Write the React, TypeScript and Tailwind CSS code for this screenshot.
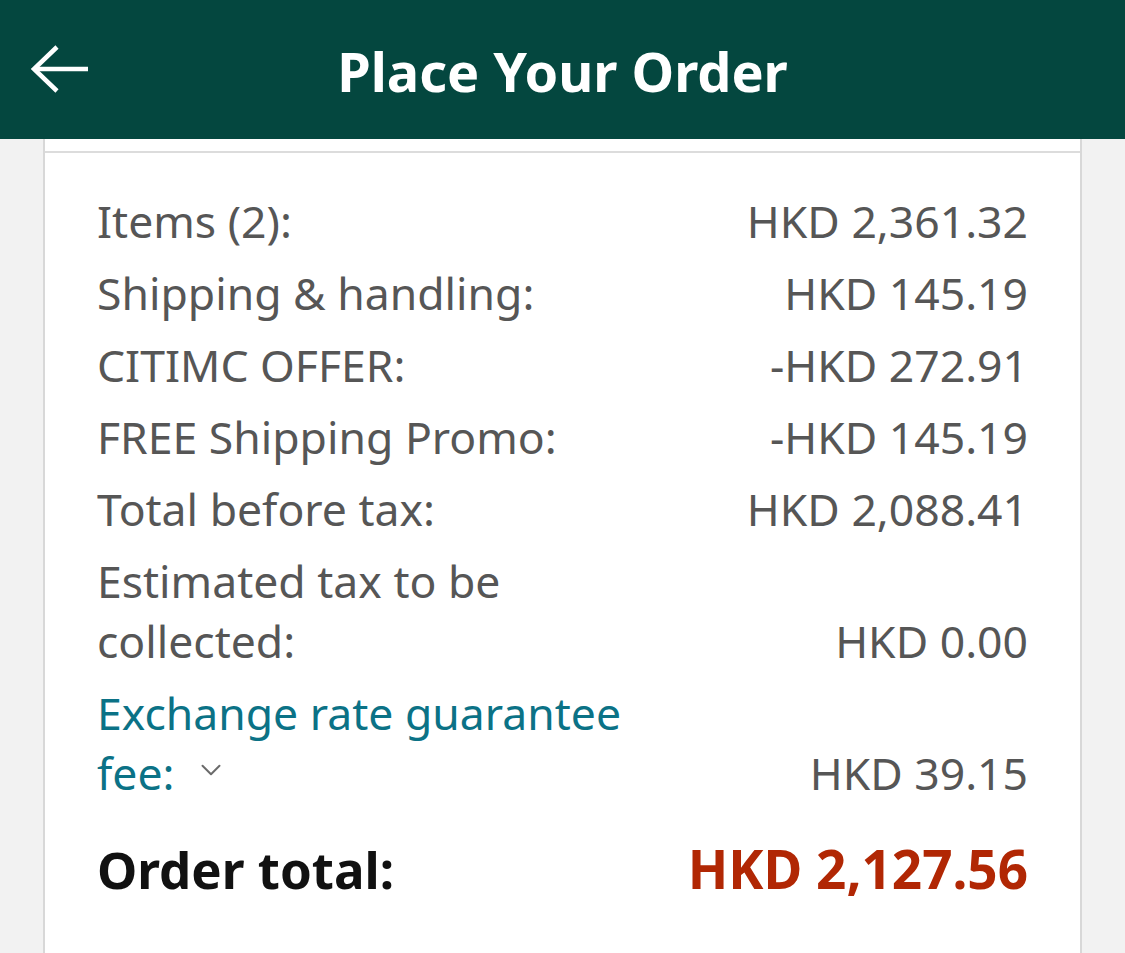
import { ChevronDown } from 'lucide-react'

type Row = { label: string; value: string }

const rows: Row[] = [
  { label: 'Items (2):', value: 'HKD 2,361.32' },
  { label: 'Shipping & handling:', value: 'HKD 145.19' },
  { label: 'CITIMC OFFER:', value: '-HKD 272.91' },
  { label: 'FREE Shipping Promo:', value: '-HKD 145.19' },
  { label: 'Total before tax:', value: 'HKD 2,088.41' },
  { label: 'Estimated tax to be collected:', value: 'HKD 0.00' },
]

export default function App() {
  return (
    <div className="w-[1125px] h-[953px] overflow-hidden bg-[#f2f2f2] flex flex-col" style={{ fontFamily: '"Noto Sans", "Open Sans", sans-serif' }}>
      {/* Header */}
      <header className="h-[139px] shrink-0 bg-[#04473f] flex items-center relative">
        <svg className="absolute left-[30px] top-[44px]" width="62" height="50" viewBox="0 0 62 50" fill="none" stroke="white" strokeWidth="4.5">
          <path d="M4 25 H58" />
          <path d="M27 3 L4 25 L27 47" />
        </svg>
        <h1 className="w-full text-center text-white font-bold text-[54px] leading-none pt-[2px]">Place Your Order</h1>
      </header>

      {/* Card */}
      <div className="flex-1 mx-[43px] bg-white border-x-2 border-[#d8d8d8]">
        <div className="h-[12px]" />
        <div className="h-[2px] bg-[#dcdcdc]" />
        <div className="px-[52px] pt-[38px] flex flex-col gap-[12px] text-[44.5px] leading-[60px] text-[#565656]">
          {rows.map(r => (
            <div key={r.label} className="flex justify-between items-end">
              <span className="w-[560px]">{r.label}</span>
              <span>{r.value}</span>
            </div>
          ))}
          <div className="flex justify-between items-end">
            <span className="w-[560px] text-[#0b7286]">
              Exchange rate guarantee fee:
              <ChevronDown className="inline-block ml-[20px] mb-[16px] w-[34px] h-[34px] text-[#6b6b6b]" strokeWidth={1.4} />
            </span>
            <span>HKD 39.15</span>
          </div>
          <div className="flex justify-between items-center mt-[24px] font-bold text-[51px]">
            <span className="text-[#111]">Order total:</span>
            <span className="text-[#b12704] text-[53px]">HKD 2,127.56</span>
          </div>
        </div>
      </div>
    </div>
  )
}
